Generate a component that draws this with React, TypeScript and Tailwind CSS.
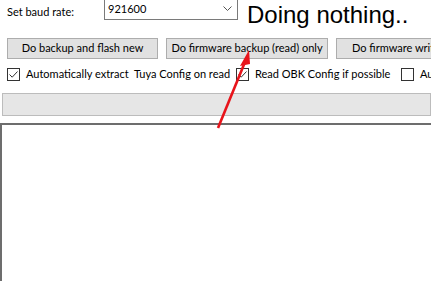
import React from "react";

const Check = ({ checked }: { checked: boolean }) => (
  <div className="w-[13px] h-[13px] border border-[#333333] bg-white flex items-center justify-center shrink-0">
    {checked && (
      <svg width="11" height="11" viewBox="0 0 11 11">
        <path d="M1.5 5.5 L4.2 8.2 L9.5 2.5" fill="none" stroke="#333" strokeWidth="1" />
      </svg>
    )}
  </div>
);

const Btn = ({ w, children, left }: { w: string; children: React.ReactNode; left?: boolean }) => (
  <div
    className={`${w} h-[21px] shrink-0 bg-[#e1e1e1] border border-[#adadad] flex items-center ${
      left ? "justify-start pl-[15px]" : "justify-center"
    } text-[11px] text-black whitespace-nowrap overflow-hidden`}
  >
    {children}
  </div>
);

export default function App() {
  return (
    <div
      className="relative w-[431px] h-[281px] bg-white overflow-hidden text-black"
      style={{ fontFamily: 'Lato, "Liberation Sans", sans-serif' }}
    >
      <div className="flex h-[30px]">
        <div className="pl-[7px] pt-[4px] w-[104px] text-[11px] shrink-0">Set baud rate:</div>
        <div className="-mt-[2px] w-[134px] h-[22px] border border-[#7a7a7a] bg-white flex items-center justify-between pl-[3px] pr-[5px] shrink-0">
          <span className="text-[11px] pt-[1px]">921600</span>
          <svg width="9" height="6" viewBox="0 0 9 6">
            <path d="M0.5 0.5 L4.5 4.5 L8.5 0.5" fill="none" stroke="#555" strokeWidth="1" />
          </svg>
        </div>
        <div
          className="ml-[9px] text-[24px] leading-[30px] whitespace-nowrap"
          style={{ fontFamily: '"Liberation Sans", Arial, sans-serif' }}
        >
          Doing nothing..
        </div>
      </div>

      <div className="flex gap-[8px] pl-[7px] mt-[8px]">
        <Btn w="w-[151px]">Do backup and flash new</Btn>
        <Btn w="w-[162px]">Do firmware backup (read) only</Btn>
        <Btn w="w-[170px]" left>
          Do firmware write
        </Btn>
      </div>

      <div className="flex items-center pl-[7px] mt-[8px] h-[14px] text-[11px] whitespace-nowrap">
        <Check checked />
        <span className="ml-[6px] w-[210px] shrink-0">Automatically extract&nbsp; Tuya Config on read</span>
        <Check checked />
        <span className="ml-[6px] w-[146px] shrink-0">Read OBK Config if possible</span>
        <Check checked={false} />
        <span className="ml-[6px]">Au</span>
      </div>

      <div className="ml-[2px] mt-[12px] h-[23px] bg-[#e6e6e6] border border-[#bcbcbc]" />

      <div className="mt-[7px] h-[200px] border-t-2 border-l-2 border-[#6d6d6d] bg-white" />

      <svg className="absolute inset-0 pointer-events-none" width="431" height="281" viewBox="0 0 431 281">
        <line x1="218" y1="128" x2="245" y2="62" stroke="#e8141b" strokeWidth="2.6" />
        <polygon points="249,50 240,66 250,64" fill="#e8141b" />
      </svg>
    </div>
  );
}
